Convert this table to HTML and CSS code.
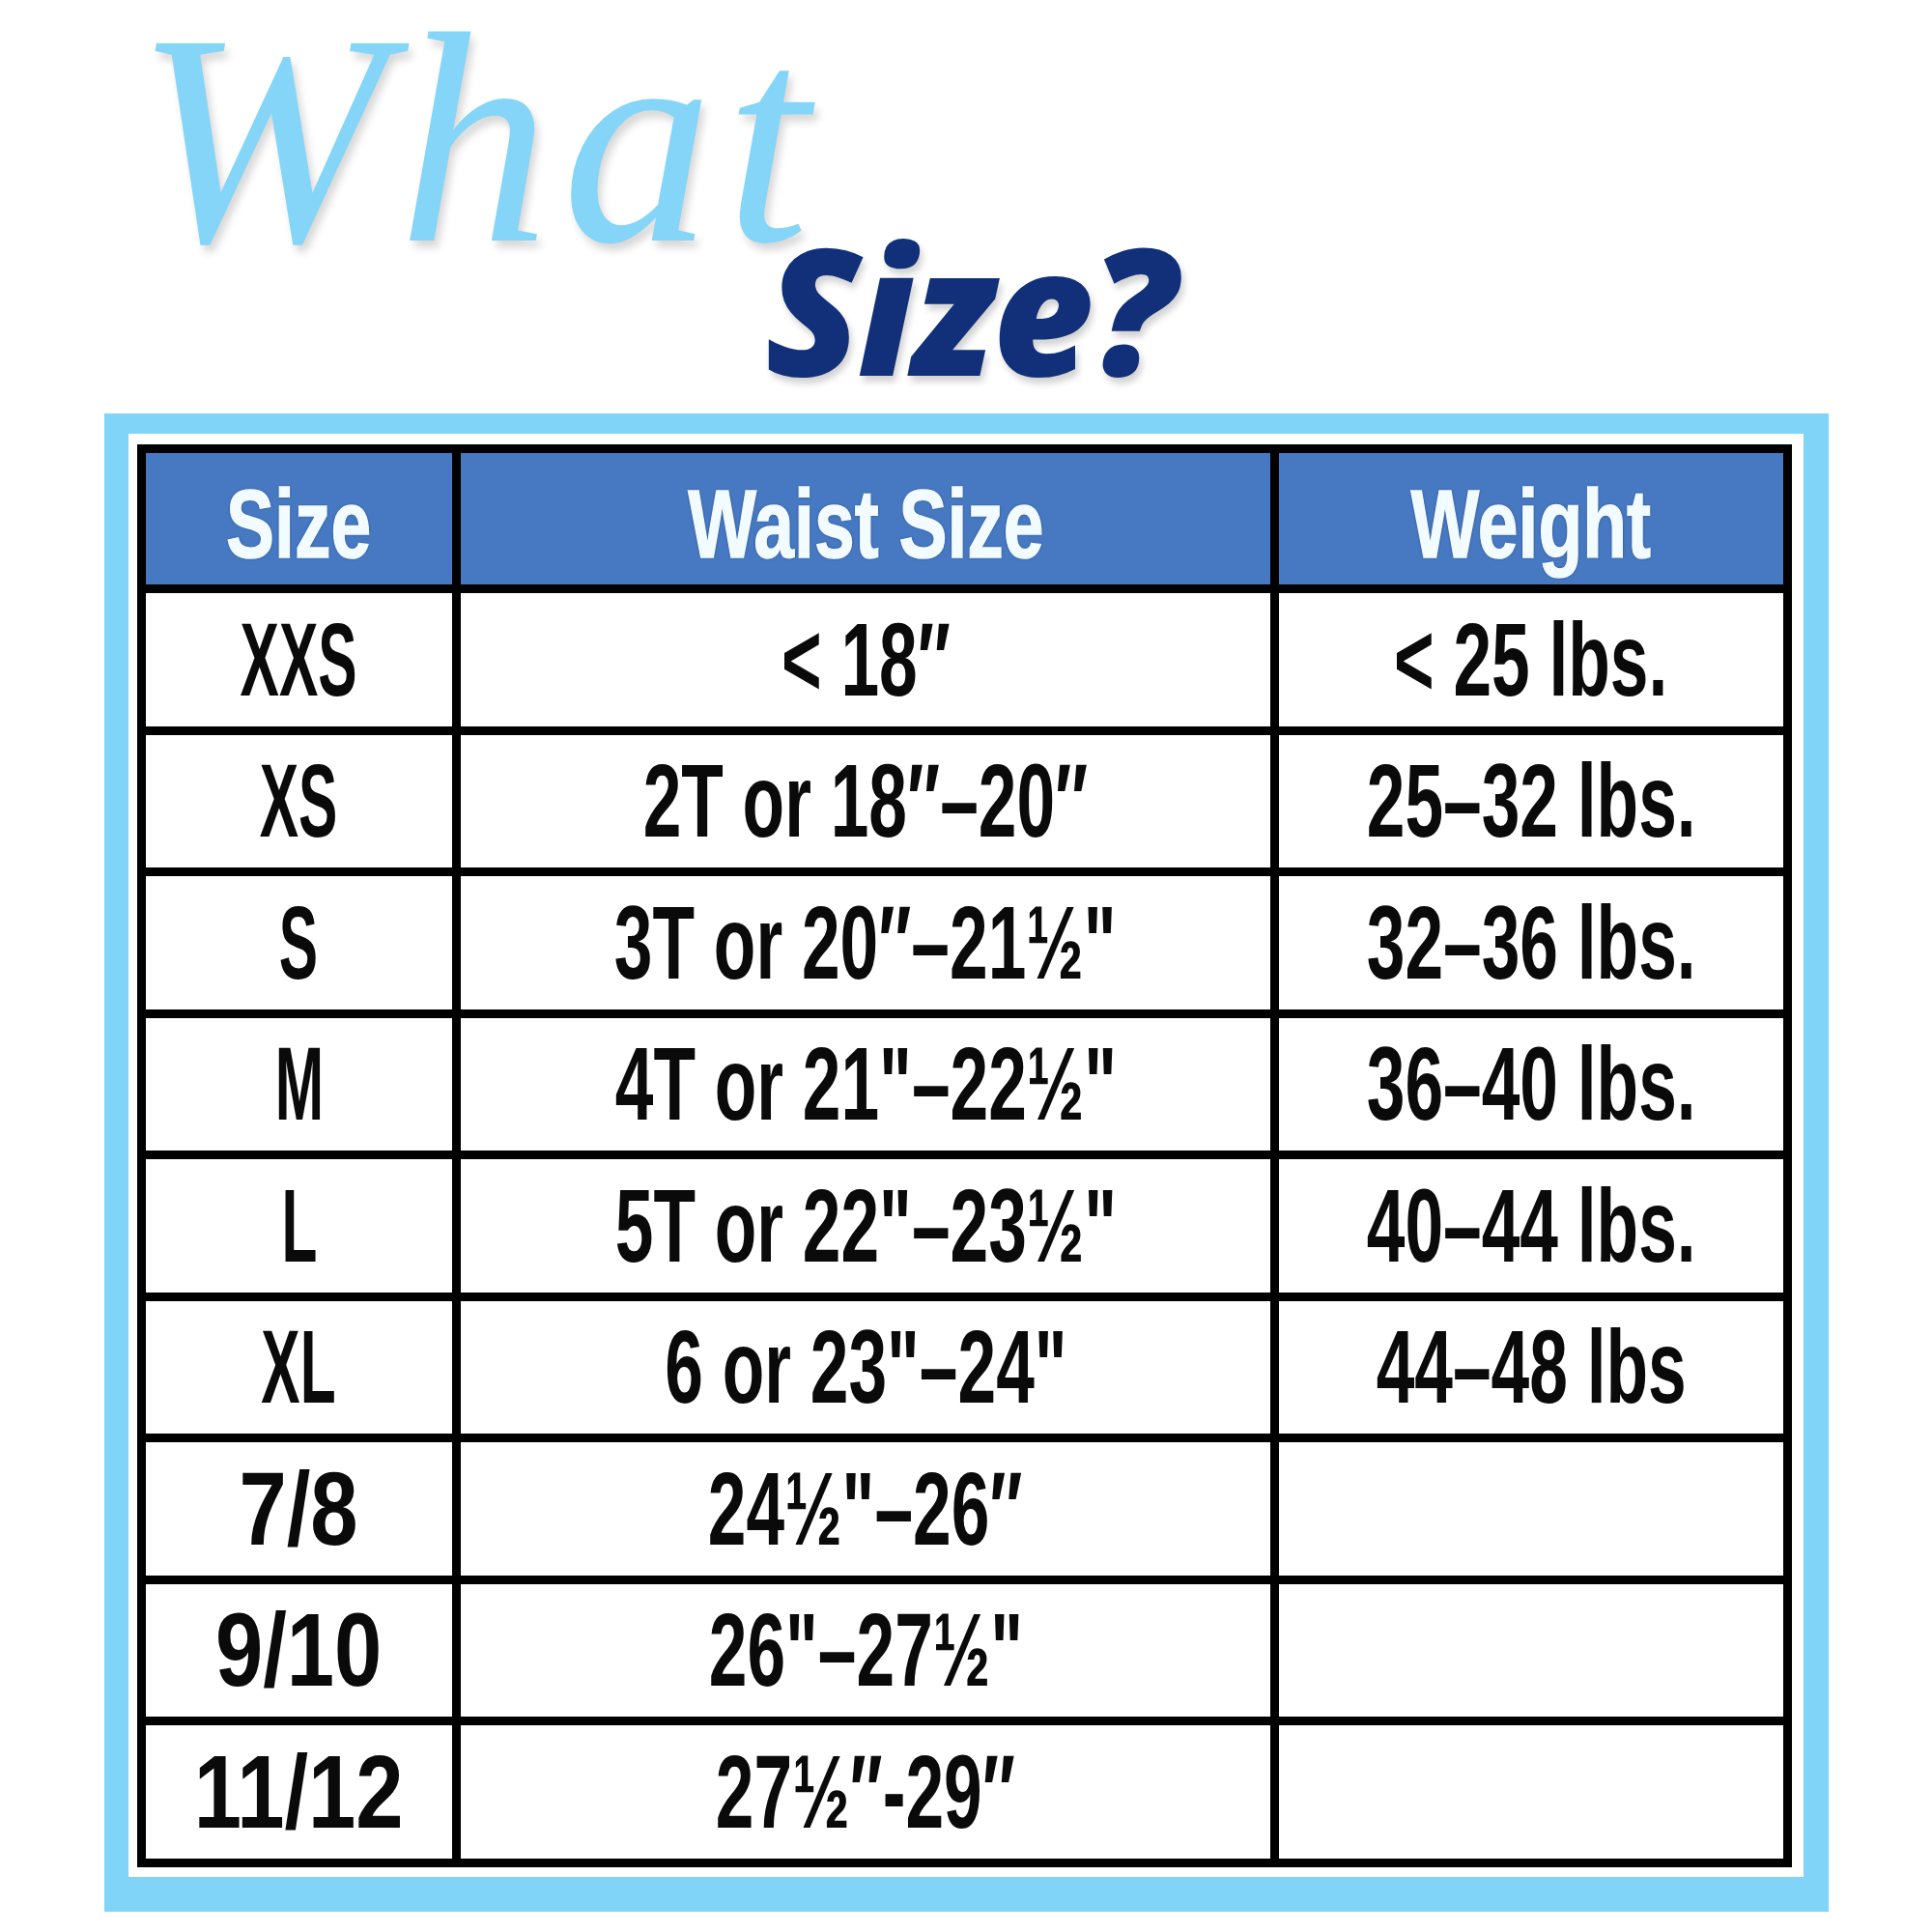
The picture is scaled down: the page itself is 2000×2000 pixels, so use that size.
FILE: index.html
```html
<!DOCTYPE html>
<html lang="en">
<head>
<meta charset="utf-8">
<title>What Size?</title>
<link rel="stylesheet" href="styles.css">
</head>
<body>
<div class="page">
  <h1 class="title">
    <span class="what">What</span>
    <span class="size">Size?</span>
  </h1>
  <div class="frame">
    <div class="chart">
      <div class="cell head"><span class="t hs">Size</span></div>
      <div class="cell head"><span class="t hs">Waist Size</span></div>
      <div class="cell head"><span class="t hs">Weight</span></div>

      <div class="cell"><span class="t lt">XXS</span></div>
      <div class="cell"><span class="t">&lt; 18″</span></div>
      <div class="cell"><span class="t">&lt; 25 lbs.</span></div>

      <div class="cell"><span class="t lt">XS</span></div>
      <div class="cell"><span class="t">2T or 18″–20″</span></div>
      <div class="cell"><span class="t">25–32 lbs.</span></div>

      <div class="cell"><span class="t lt">S</span></div>
      <div class="cell"><span class="t">3T or 20″–21½"</span></div>
      <div class="cell"><span class="t">32–36 lbs.</span></div>

      <div class="cell"><span class="t lt">M</span></div>
      <div class="cell"><span class="t">4T or 21"–22½"</span></div>
      <div class="cell"><span class="t">36–40 lbs.</span></div>

      <div class="cell"><span class="t lt">L</span></div>
      <div class="cell"><span class="t">5T or 22"–23½"</span></div>
      <div class="cell"><span class="t">40–44 lbs.</span></div>

      <div class="cell"><span class="t lt">XL</span></div>
      <div class="cell"><span class="t">6 or 23"–24"</span></div>
      <div class="cell"><span class="t">44–48 lbs</span></div>

      <div class="cell"><span class="t fr">7/8</span></div>
      <div class="cell"><span class="t">24½"–26″</span></div>
      <div class="cell"></div>

      <div class="cell"><span class="t fr">9/10</span></div>
      <div class="cell"><span class="t">26"–27½"</span></div>
      <div class="cell"></div>

      <div class="cell"><span class="t fr">11/12</span></div>
      <div class="cell"><span class="t">27½″-29″</span></div>
      <div class="cell"></div>
    </div>
  </div>
</div>
</body>
</html>
```

FILE: styles.css
```css
html, body {
  margin: 0;
  padding: 0;
  background: #ffffff;
}

.page {
  width: 2000px;
  height: 2000px;
  overflow: hidden;
}

.title {
  margin: 0;
  padding-top: 0;
  font-weight: normal;
}

.what {
  display: block;
  padding-left: 140px;
  font-family: "Liberation Serif", "Times New Roman", serif;
  font-style: italic;
  font-size: 312px;
  line-height: 288px;
  letter-spacing: 13px;
  color: #84d5f8;
  text-shadow: 4px 7px 8px rgba(0, 0, 0, 0.16);
}

.size {
  display: block;
  margin-top: -79px;
  padding-left: 792px;
  font-family: "Open Sans", "Liberation Sans", sans-serif;
  font-style: italic;
  font-weight: 800;
  font-size: 182px;
  line-height: 219px;
  letter-spacing: -4px;
  color: #12307a;
  text-shadow: 3px 6px 7px rgba(0, 0, 0, 0.18);
}

.frame {
  box-sizing: border-box;
  width: 1785px;
  margin: 0 0 0 108px;
  border-style: solid;
  border-color: #80d4f8;
  border-width: 21px 26px 36px 25px;
  padding: 11px 12px 10px 9px;
  background: #ffffff;
}

.chart {
  display: grid;
  grid-template-columns: 317px 838px 522px;
  grid-template-rows: 136px repeat(9, 137.5px);
  gap: 9px;
  padding: 9px;
  background: #000000;
}

.cell {
  background: #ffffff;
  display: flex;
  align-items: center;
  justify-content: center;
  overflow: hidden;
  font-family: "Liberation Sans", Arial, sans-serif;
  font-weight: bold;
  font-size: 108px;
  color: #0a0a0a;
}

.cell.head {
  background: #4679c2;
  font-size: 100px;
  color: #f2fbff;
  padding-top: 10px;
  box-sizing: border-box;
}

.t {
  display: inline-block;
  white-space: nowrap;
  line-height: 1;
  transform: scaleX(0.66);
  transform-origin: center;
}

.t.lt {
  transform: scaleX(0.56);
}

.t.fr {
  transform: scaleX(0.82);
}

.t.hs {
  transform: scaleX(0.75);
  -webkit-text-stroke: 1.5px #f2fbff;
  text-shadow: 0 0 3px rgba(0, 10, 50, 0.7);
}
```
